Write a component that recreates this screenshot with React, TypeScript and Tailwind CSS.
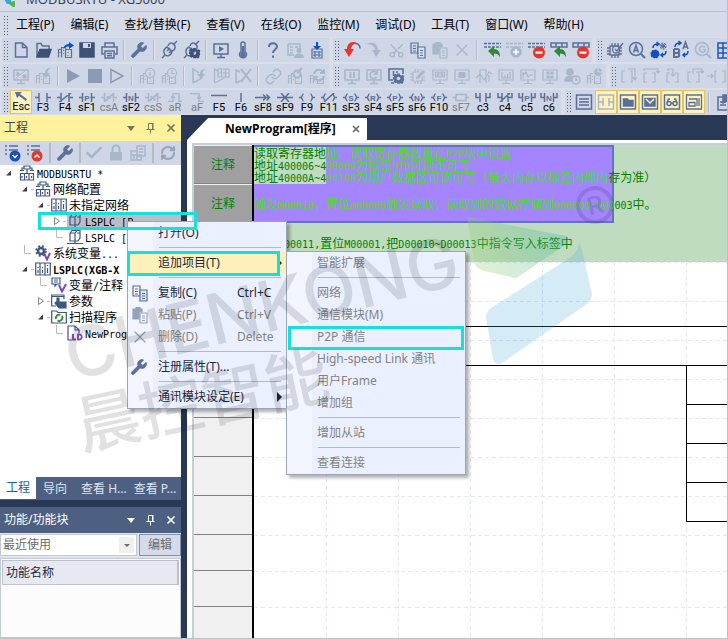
import { ReactNode } from 'react';
import clsx from 'clsx';
import { Check, Link as LinkIcon, RefreshCw, Scissors, Wrench, X } from 'lucide-react';

interface Tool {
  name: string;
  icon?: ReactNode;
  off?: boolean;
  on?: boolean;
  key?: string;
  sep?: boolean;
}

interface MenuEntry {
  label?: string;
  shortcut?: string;
  icon?: ReactNode;
  off?: boolean;
  sub?: boolean;
  hot?: boolean;
}

interface TreeRow {
  depth: number;
  label: string;
  icon: ReactNode;
  state?: 'open' | 'closed';
  bold?: boolean;
  selected?: boolean;
}

const SEP: Tool = { name: 'sep', sep: true };

function Glyph({ children, w = 1.5 }: { children: ReactNode; w?: number }) {
  return (
    <svg viewBox="0 0 20 20" className="w-5 h-5 shrink-0" fill="none" stroke="currentColor" strokeWidth={w} aria-hidden="true">
      {children}
    </svg>
  );
}

/* small building blocks shared by several toolbar icons */
const screen = <path d="M3 4h14v10H3zM10 14v3M6 17.500h8" />;
const building = <path d="M3.500 17.500v-8h3v8M6.500 17.500v-10h4v10M10.500 17.500v-8h6v8zM8.500 10v1M8.500 13v1M13 12v1M13 15v1M5 12v1" />;
const cog = (x: number, y: number) => (
  <g stroke="none" fill="currentColor">
    <path
      transform={`translate(${x} ${y})`}
      fillRule="evenodd"
      d="M-1.200-5h2.400l.4 1.500 1.300.5 1.400-.8 1.600 1.600-.8 1.400.5 1.300V2l-1 .8.5 1.200-1.600 1.600-1.600-.8L1.200 5.300h-2.400l-.6-1.300-1.600.7L-5 3.100l.8-1.500L-5.500 1v-2.200l1.400-.5-.7-1.500 1.600-1.500 1.500.7zM0-1.800A1.800 1.800 0 1 0 0 1.800 1.800 1.800 0 1 0 0-1.800z"
    />
  </g>
);
const chip = <path d="M5 6h9v9H5zM7 3v3M10 3v3M13 3v3M7 15v3M10 15v3M13 15v3M2 8h3M2 11h3M2 14h3M14 8h3M14 11h3M14 14h3" />;
const plug = <path d="M3 18l3-3M6 15c-3-4 0-7 2-8l5 5c-1 3-4 5-7 3zM9 6l1-2c4-3 8 2 5 6l-2 1M14 5l4-4M8 11l3-3M10 13l3-3" />;
const stopSign = (
  <g stroke="none">
    <circle cx="13" cy="12.500" r="6" fill="#e5352c" />
    <path d="M9.500 11.500h7v2.200h-7z" fill="#fff" />
  </g>
);
const backArrow = <path d="M6 11l6-5v3c4 0 6 3 6 8-1.500-2.500-3-3.500-6-3.500V17z" fill="#2f8a36" stroke="none" />;
const dashes = <path d="M2 3.500h17M2 7h17" strokeDasharray="3 1" />;
const blocks = <path d="M3 3h16v4H3zM8 3v4M14 3v4" fill="none" />;

const copyIcon = (
  <Glyph w={1.2}>
    <path d="M3 3h7v10H3zM5 6h3M5 8.500h3M5 11h3" />
    <path d="M10 7h7v11h-7z" fill="#dbe2f2" />
    <path d="M12 10.500h3M12 13h3M12 15.500h3" />
  </Glyph>
);
const pasteIcon = (
  <Glyph w={1.2}>
    <path d="M3 4h3V2.500h4V4h2v3H9v7H3z" fill="currentColor" />
    <path d="M10 8h7v10h-7zM12 11h3M12 13h3M12 15.500h3" />
  </Glyph>
);
const wrenchIcon = <Wrench className="w-[18px] h-[18px] shrink-0" fill="currentColor" strokeWidth={1} />;
const crossIcon = <X className="w-5 h-5 shrink-0" strokeWidth={1.5} />;

const fileTools: Tool[] = [
  { name: '新建', icon: <Glyph><path d="M4.500 3h7l4.500 4.500V17H4.500zM11.500 3v4.500H16" /></Glyph> },
  {
    name: '打开',
    icon: <Glyph><path d="M4 17V3.500h4L9.500 6H16v3" /><path d="M4 17l3-7.500h11L15.500 17z" fill="#3d5277" stroke="#3d5277" /></Glyph>,
  },
  {
    name: '导入工程',
    icon: <Glyph w={1.2}>{building}<path d="M8 9c1-4 4-5 6-5V2l5 3.500L14 9V6.500c-2 0-4 .5-6 2.500z" fill="#0a50cc" stroke="none" /></Glyph>,
  },
  {
    name: '保存',
    icon: <Glyph><path d="M3 3h14v14H3z" fill="#3d5277" stroke="#3d5277" /><path d="M6 3h8v5H6z" fill="#cfd6e5" stroke="none" /><path d="M11 4h2v3h-2z" fill="#3d5277" stroke="none" /></Glyph>,
  },
  { name: '打印', icon: <Glyph><path d="M6 7V3h9v4M5 14H3V7h15v7h-2M6 11h9v7H6zM8 13.500h5M8 15.700h5" /></Glyph> },
  SEP,
  { name: '设置', icon: wrenchIcon },
  SEP,
  { name: '连接', icon: <Glyph>{plug}</Glyph> },
  { name: '连接设置', icon: <Glyph>{plug}<g color="#3d5277">{cog(13.5, 13)}</g></Glyph> },
  SEP,
  { name: '监视', icon: <Glyph>{screen}<path d="M8 6l5 3-5 3z" fill="currentColor" stroke="none" /></Glyph> },
  { name: '诊断', icon: <Glyph><path d="M8 11.500V4a2 2 0 0 1 4 0v7.500a3.500 3.500 0 1 1-4 0z" /><path d="M10 6v8" strokeWidth="2" /><circle cx="10" cy="14.500" r="2" fill="currentColor" /></Glyph> },
  SEP,
  { name: '帮助', icon: <Glyph w={2}><path d="M6 7c0-5 8-5 8-.5 0 3-4 3-4 6.500" /><path d="M10 15.500v2.200" /></Glyph> },
  { name: '用户', off: true, icon: <Glyph><path d="M3 4h12v5M3 4v11h6M5 7h3M10 7h3M5 10h3M5 13h3" /><circle cx="14" cy="10.500" r="2.500" fill="currentColor" stroke="none" /><path d="M9 18c0-6 10-6 10 0z" fill="currentColor" stroke="none" /></Glyph> },
  { name: '写入', icon: <Glyph w={1.2}><path d="M5 9h10v9H5zM8 11v6M12 11v6M6 12h8M6 15h8" /><path d="M9 2h2v4h3l-4 4-4-4h3z" fill="#0a50cc" stroke="none" /></Glyph> },
];

const editTools: Tool[] = [
  { name: '撤消', icon: <Glyph><path d="M15 3C9 0 5 4 5 9H2l5 8 5-8H9c0-3 2-5 6-6z" fill="#e5352c" stroke="none" /><path d="M13 3.500c3 0 5 2 5 5" /></Glyph> },
  { name: '重做', off: true, icon: <Glyph><path d="M2 4c7-3 12 0 12 6h3l-5 7-4-7h3c0-3-3-6-9-6z" fill="currentColor" stroke="none" /></Glyph> },
  { name: '剪切', off: true, icon: <Scissors className="w-[17px] h-[17px] -rotate-90" strokeWidth={2} /> },
  { name: '复制', icon: copyIcon },
  { name: '粘贴', off: true, icon: pasteIcon },
  { name: '删除', off: true, icon: crossIcon },
  SEP,
  { name: '恢复行', icon: <Glyph>{dashes}{backArrow}</Glyph> },
  { name: '插入行', off: true, icon: <Glyph>{dashes}<circle cx="12" cy="12" r="5" fill="currentColor" /><path d="M9 12h6M12 9v6" stroke="#fff" /></Glyph> },
  { name: '删除行', icon: <Glyph>{dashes}{stopSign}</Glyph> },
  { name: '恢复块', icon: <Glyph>{blocks}{backArrow}</Glyph> },
  { name: '删除块', icon: <Glyph>{blocks}{stopSign}</Glyph> },
];

const findTools: Tool[] = [
  { name: '芯片检查', icon: <Glyph w={1.3}>{chip}<circle cx="11" cy="9.500" r="3.500" fill="#cfd6e5" /><path d="M10 9l2 2 6-8" /></Glyph> },
  { name: '查找', icon: <Glyph><circle cx="9" cy="9" r="6.500" /><path d="M14 14l4 4" strokeWidth="2" /><path d="M6.500 12.500L9 5.500l2.500 7M7.500 10.500h3" /></Glyph> },
  {
    name: '替换变量',
    icon: <Glyph w={1.2}><circle cx="14" cy="6" r="3" strokeDasharray="2 1" /><circle cx="14" cy="6" r="1.500" fill="currentColor" /><circle cx="6" cy="14" r="4" fill="#0a50cc" stroke="#3d5277" strokeDasharray="2 1" /><path d="M4 8c0-3 2-4 5-4M7.500 2L10 4 7.500 6M17 11c0 3-2 4-4 4M14 13l-2 2 2 2" stroke="#0a50cc" strokeWidth="1.500" /></Glyph>,
  },
  {
    name: '替换文本',
    icon: <Glyph><path d="M12 9l2.500-7L17 9M13 7h3" /><path d="M3 9v8h3c3 0 3-4 0-4H3M3 9h3c3 0 3 4 0 4" strokeWidth="2" /><path d="M4 7c0-3 2-4 5-4M7.500 1L10 3 7.500 5M17 11c0 3-2 4-4 4M14 13l-2 2 2 2" stroke="#0a50cc" /></Glyph>,
  },
  { name: '再次查找', off: true, icon: <Glyph><circle cx="9" cy="9" r="6.500" /><path d="M14 14l4 4" strokeWidth="2" /><path d="M12 7.500A3 3 0 1 0 12 11V9.500h-2" /></Glyph> },
  { name: '表格', icon: <Glyph><path d="M3 3h15v15H3zM3 8h15M3 13h15M8 3v15M13 3v15" stroke="#1f55c0" /></Glyph> },
];

const runTools: Tool[] = [
  { name: '监控切换', off: true, icon: <Glyph>{screen}<path d="M5 12l9-7M6 6l3 2-3 2zM12 9h3v3h-3z" fill="currentColor" strokeWidth="1" /></Glyph> },
  { name: '下载', off: true, icon: <Glyph w={1.2}>{building}<path d="M18 2c-4 0-6 2-6 5H9l4 5 4-5h-2.500c0-2 1-4 3.500-5z" fill="currentColor" stroke="none" /></Glyph> },
  SEP,
  { name: '运行', off: true, icon: <Glyph><path d="M4 3l13 7-13 7z" fill="#8b9bb5" stroke="none" /></Glyph> },
  { name: '停止', off: true, icon: <Glyph><path d="M3 3h14v14H3z" fill="#8b9bb5" stroke="none" /></Glyph> },
  { name: '单步', off: true, icon: <Glyph><path d="M4 3.500l12 6.500-12 6.500z" stroke="#8b9bb5" /></Glyph> },
  SEP,
  { name: '信息', off: true, icon: <Glyph w={1.2}>{building}<circle cx="13" cy="7" r="4.500" fill="#cfd6e5" /><path d="M13 6v4M13 4v1" /></Glyph> },
  { name: '历史', off: true, icon: <Glyph w={1.2}>{building}<circle cx="13" cy="7" r="4.500" fill="#cfd6e5" /><path d="M13 4v3.500h2.500" /></Glyph> },
  SEP,
  { name: '强制', off: true, icon: <Glyph><path d="M4 17V3l6 4M4 17l9-5" /><path d="M17 3c-5 0-6 3-6 5H8l4 5 4-5h-2.500c0-2 1-4 3.500-5z" fill="currentColor" stroke="none" /></Glyph> },
  { name: '强制表', off: true, icon: <Glyph w={1.2}><path d="M3.500 17V3l3 2M3.500 17l10-5M7 3h11v8H7zM7 7h11M10.500 3v8M14.500 3v8" /></Glyph> },
  { name: '取消强制', off: true, icon: <Glyph><path d="M3 17V4l4 2M3 17l6-3" /><path d="M8 3l10 13M18 3L8 16" strokeWidth="2" /></Glyph> },
  SEP,
  { name: '链接', off: true, icon: <LinkIcon className="w-[17px] h-[17px]" strokeWidth={2} /> },
  { name: '模块检查', off: true, icon: <Glyph w={1.2}>{building}<circle cx="12" cy="8" r="3.500" fill="#cfd6e5" strokeWidth="2" /><path d="M12 7l5-5" strokeWidth="2" /></Glyph> },
  { name: '模块刷新', off: true, icon: <Glyph w={1.2}>{building}<circle cx="12" cy="8.500" r="6" fill="#cfd6e5" stroke="none" /><path d="M7 8a5 5 0 0 1 9-2M17 10a5 5 0 0 1-9 2M17 3v4h-4M7 15v-4h4" strokeWidth="2" /></Glyph> },
];

const monitorTools: Tool[] = [
  { name: '暂停监控', off: true, icon: <Glyph>{screen}<path d="M8.500 6v6M12 6v6" strokeWidth="2" /></Glyph> },
  { name: '恢复监控', off: true, icon: <Glyph>{screen}<path d="M12.500 7a3.500 3.500 0 1 0 0 4M13 5v3h-3" /></Glyph> },
  { name: '监控设置', icon: <Glyph><path d="M17 8V3H3v11h4M7.500 5v5M11 5v2M5 17h3" />{cog(12.5, 12.5)}</Glyph> },
  { name: '编辑芯片', off: true, icon: <Glyph w={1.2}>{chip}<path d="M7 14l1-4 7-7 3 3-7 7z" fill="currentColor" stroke="#cfd6e5" /></Glyph> },
  { name: '数值', off: true, icon: <Glyph w={1.2}>{screen}<path d="M5.500 6h2v5h-2zM9 6h2v5H9zM12.500 6h2v5h-2z" /></Glyph> },
  { name: '特殊模块', off: true, icon: <Glyph w={1.2}>{screen}<path d="M7.500 6.500h5v5h-5z" fill="currentColor" /><path d="M5.500 8h9M5.500 10.500h9" /></Glyph> },
  { name: '趋势', off: true, icon: <Glyph w={1.2}><path d="M6 17V4h6v13M2 12l4-4 4 6 5-8 3 2M15 9v7" /></Glyph> },
  { name: '柱状图', off: true, icon: <Glyph w={1.2}>{screen}<path d="M6 6v6h9M9 12V9M11.500 12V8M14 12V6" /></Glyph> },
  { name: '曲线', off: true, icon: <Glyph w={1.2}>{screen}<path d="M5 9l3-3 2 5 2-2h3M5 6v6" /></Glyph> },
  { name: '窗格', off: true, icon: <Glyph w={1.2}>{screen}<path d="M7 6h2v2H7zM11 6h2v2h-2zM7 10h2v2H7zM11 10h2v2h-2z" fill="currentColor" /></Glyph> },
  { name: '用户事件', off: true, icon: <Glyph><circle cx="8" cy="6" r="3" fill="currentColor" /><path d="M3 15c0-6 9-6 9-2l-2 2z" fill="currentColor" /><circle cx="14" cy="14" r="4" fill="#cfd6e5" /><path d="M14 11.500V14h2" /></Glyph> },
  { name: '数据统计', off: true, icon: <Glyph w={1.2}>{building}<circle cx="14" cy="6" r="4.500" fill="currentColor" stroke="#cfd6e5" /><path d="M14 6V1.500M14 6h4.500" stroke="#cfd6e5" /></Glyph> },
];

const debugTools: Tool[] = [
  { name: '步入', off: true, icon: <Glyph w={1.2}><path d="M6 5H3v11h3M11 5h2v11h-2M9 3h7v10M14 11l2 3 2-3" /></Glyph> },
  { name: '步过', off: true, icon: <Glyph w={1.2}><path d="M6 7H3v9h3M11 7h3v9h-3M3 5V3h14v4M15 5l2 2 2-2" /></Glyph> },
  { name: '步出', off: true, icon: <Glyph w={1.2}><path d="M7 7H4v9h3M12 7h3v9h-3M5 5V3h5v7M8 8l2 2 2-2" /></Glyph> },
  { name: '运行到断点', off: true, icon: <Glyph w={1.2}><path d="M6 6H3v10h3M11 6h3v10h-3M8 8V3h9v4M15 5l2 2 2-2" /></Glyph> },
  { name: '运行到光标', off: true, icon: <Glyph w={1.2}><path d="M10 5H8v11h2M15 5h3v11h-3M0 10h6M4 8l2 2-2 2" /></Glyph> },
];

/* ladder symbols sit above their function key */
function Ladder({ d, letter }: { d: string; letter?: string }) {
  return (
    <svg viewBox="0 0 18 9" className="w-[18px] h-[9px] shrink-0" fill="none" stroke="currentColor" strokeWidth={1.5} aria-hidden="true">
      <path d={d} />
      {letter && (
        <text x="9" y="8" textAnchor="middle" fontSize="8" fontWeight="700" fontFamily="Liberation Sans" fill="currentColor" stroke="none">
          {letter}
        </text>
      )}
    </svg>
  );
}

const contact = 'M1 4.500h4M5 0v9M13 0v9M13 4.500h4';
const narrow = 'M1 4.500h3M4.500 0v9M13.500 0v9M14 4.500h3';
const coil = 'M1 4.500h2M5.500 1C4 1 4.500 4 3 4.500 4.500 5 4 8 5.500 8M12.500 1c1.500 0 1 3 2.500 3.500C13.500 5 14 8 12.500 8M15 4.500h2';
const parallel = 'M2 0v4.500h4M6 0v9M12 0v9M12 4.500h4V0';

const ladderTools: Tool[] = [
  { name: '选择', key: 'Esc', on: true, icon: <svg viewBox="0 0 18 9" className="w-[18px] h-[9px] shrink-0" aria-hidden="true"><path d="M3 0h7L8 2l7 5-1 2-7-5-2 2z" fill="currentColor" /></svg> },
  { name: '常开触点', key: 'F3', icon: <Ladder d={contact} /> },
  { name: '常闭触点', key: 'F4', icon: <Ladder d={contact + 'M3 9L15 0'} /> },
  { name: '上升沿触点', key: 'sF1', icon: <Ladder d={narrow} letter="P" /> },
  { name: '上升沿取反', key: 'csA', off: true, icon: <Ladder d={narrow + 'M4 9L14 0'} letter="P" /> },
  { name: '下降沿触点', key: 'sF2', icon: <Ladder d={narrow} letter="N" /> },
  { name: '下降沿取反', key: 'csS', off: true, icon: <Ladder d={narrow + 'M4 9L14 0'} letter="N" /> },
  { name: '上升沿', key: 'aR', off: true, icon: <Ladder d="M2 8.500h5v-8h6v8h3M5 5l2-2 2 2" /> },
  { name: '下降沿', key: 'aF', off: true, icon: <Ladder d="M2 .5h9v8h5M9 4l2 2 2-2" /> },
  { name: '横线', key: 'F5', icon: <Ladder d="M1 2.500h16" /> },
  { name: '竖线', key: 'F6', icon: <Ladder d="M9 0v9" /> },
  { name: '横线填充', key: 'sF8', icon: <Ladder d="M1 4.500h14M9 1.500l3 3-3 3M12.500 1.500l3 3-3 3" /> },
  { name: '取反', key: 'sF9', icon: <Ladder d="M1 4.500h16M5 0l4 4.500L5 9M13 0L9 4.500 13 9" /> },
  { name: '线圈', key: 'F9', icon: <Ladder d={coil} /> },
  { name: '反线圈', key: 'F11', icon: <Ladder d={coil + 'M4 9L14 0'} /> },
  { name: '置位线圈', key: 'sF3', icon: <Ladder d={coil} letter="S" /> },
  { name: '复位线圈', key: 'sF4', icon: <Ladder d={coil} letter="R" /> },
  { name: '上升沿线圈', key: 'sF5', icon: <Ladder d={coil} letter="P" /> },
  { name: '下降沿线圈', key: 'sF6', icon: <Ladder d={coil} letter="N" /> },
  { name: '功能', key: 'F10', icon: <Ladder d={coil} letter="F" /> },
  { name: '功能块', key: 'sF7', off: true, icon: <Ladder d="M1 4.500h3M4 1.500h10v6H4zM14 4.500h3" /> },
  { name: '并联常开', key: 'c3', icon: <Ladder d={parallel} /> },
  { name: '并联常闭', key: 'c4', icon: <Ladder d={parallel + 'M4 9L14 0'} /> },
  { name: '并联上升沿', key: 'c5', icon: <Ladder d="M1 0v4.500h3M4.500 0v9M13.500 0v9M14 4.500h3V0" letter="P" /> },
  { name: '并联下降沿', key: 'c6', icon: <Ladder d="M1 0v4.500h3M4.500 0v9M13.500 0v9M14 4.500h3V0" letter="N" /> },
];

const frame = <path d="M2.500 3h15v14h-15z" />;
const viewTools: Tool[] = [
  { name: '程序列表', icon: <Glyph>{frame}<path d="M5 7h10M5 10h10M5 13h10" /></Glyph> },
  { name: '梯形图', on: true, icon: <Glyph><g stroke="#a9b5c6">{frame}<path d="M3 10h4M7 6v8M13 6v8M13 10h4" /></g></Glyph> },
  { name: '文件夹', on: true, icon: <Glyph>{frame}<path d="M5.500 7h4l1 1.500H15V14H5.500z" fill="currentColor" /></Glyph> },
  { name: '消息', on: true, icon: <Glyph>{frame}<path d="M5 6.500h10V14H5z" fill="currentColor" /><path d="M6 7l4 4 4-4" stroke="#fff3bd" /></Glyph> },
  { name: '查看', on: true, icon: <Glyph>{frame}<circle cx="7" cy="11.500" r="2" /><circle cx="13" cy="11.500" r="2" /><path d="M5 11l1.500-4H8M15 11l-1.500-4H12M9 11h2" /></Glyph> },
  { name: '变量监视', on: true, icon: <Glyph w={1.3}>{frame}<path d="M5 7h8v7M5 10.500h6v3.500H5zM15 6v8" /></Glyph> },
  SEP,
  { name: '书签', icon: <Glyph><path d="M9 5H4v13h11v-6M6 10h6M6 13h6" /><path d="M9 3h6v8l-3-2-3 2z" fill="currentColor" /></Glyph> },
];

function ToolGroup({ tools, grow }: { tools: Tool[]; grow?: boolean }) {
  return (
    <div className={clsx('flex items-center h-6 bg-[#cfd6e5] shrink-0 pr-px', grow && 'flex-1')}>
      <span className="w-[5px] h-5 ml-px mr-0.5 bg-[radial-gradient(circle,#59627a_0.8px,transparent_1px)] bg-[size:3px_3px] shrink-0" />
      {tools.map((tool, i) =>
        tool.sep ? (
          <span key={i} className="w-0.5 h-5 mx-[3px] bg-[#b3bac8] border-r border-[#dfe4ee] shrink-0" />
        ) : (
          <button
            key={i}
            type="button"
            aria-label={tool.name}
            className={clsx(
              'w-[22px] h-6 flex flex-col items-center shrink-0',
              tool.key ? 'justify-end' : 'justify-center',
              tool.on && 'bg-[#fff3bd] border border-[#e5c365]',
              tool.off ? 'text-[#a8b7c9]' : 'text-[#5a709a]'
            )}
          >
            {tool.icon}
            {tool.key && (
              <span className={clsx("text-[11px] leading-3 font-['Roboto',sans-serif]", tool.off ? 'text-[#7d7d7d]' : 'text-black')}>
                {tool.key}
              </span>
            )}
          </button>
        )
      )}
    </div>
  );
}

/* latin characters are half the width of a CJK character */
function Mixed({ text }: { text: string }) {
  return (
    <>
      {text.split(/([\x20-\x7e]+)/).map((part, i) =>
        /^[\x20-\x7e]/.test(part) ? (
          <span key={i} className="text-[10px] leading-[8px] font-['DejaVu_Sans_Mono',monospace] whitespace-pre">{part}</span>
        ) : (
          part
        )
      )}
    </>
  );
}

function TreeIcon({ children }: { children: ReactNode }) {
  return (
    <svg viewBox="0 0 16 16" className="w-4 h-4 shrink-0" fill="none" stroke="#3f5680" strokeWidth={1.2} aria-hidden="true">
      {children}
    </svg>
  );
}

const netIcon = (
  <TreeIcon>
    <path d="M5 1h6v3H5zM3 5V3h2M11 3h2v2M1 5.500h4M11 5.500h4M8 4v4M1.500 8.500h13V15h-13zM5.500 9v6M10 9v6M3 11v2M7.500 11v2M12.500 11v2" />
  </TreeIcon>
);
const rackIcon = <TreeIcon><path d="M.7 2h14.600v12H.7zM5 2v12M10 2v12M3 6v1M3 9v3M7.500 6v1M7.500 9v3M12.500 4v1M12.500 7v5" /></TreeIcon>;
const plcIcon = <TreeIcon><path d="M3 4l2-2.500h8V9l-2 3H3zM3 4h5v8M8 4l2-2.500M10 4h3M0 14.500h16M8 12v2" /></TreeIcon>;

const tree: TreeRow[] = [
  { depth: 0, label: 'MODBUSRTU *', icon: netIcon, state: 'open' },
  { depth: 1, label: '网络配置', icon: netIcon, state: 'open' },
  { depth: 2, label: '未指定网络', icon: rackIcon, state: 'open' },
  { depth: 3, label: 'LSPLC [P', icon: plcIcon, state: 'closed', selected: true },
  { depth: 3, label: 'LSPLC [', icon: plcIcon },
  {
    depth: 1,
    label: '系统变量...',
    icon: <TreeIcon><circle cx="6" cy="6" r="3" strokeWidth="2.500" /><circle cx="6" cy="6" r="5" strokeDasharray="2 2" strokeWidth="1.500" /><path d="M9 8l3 6.500L15 8" stroke="#7b46c4" strokeWidth="2" /></TreeIcon>,
  },
  { depth: 1, label: 'LSPLC(XGB-X', icon: rackIcon, state: 'open', bold: true },
  {
    depth: 2,
    label: '变量/注释',
    icon: <TreeIcon><path d="M1 1h8v6H6L4 9V7H1zM3 3h4M3 5h4" /><path d="M8 8l3 6.500L15 7" stroke="#7b46c4" strokeWidth="2" /></TreeIcon>,
  },
  {
    depth: 2,
    label: '参数',
    icon: <TreeIcon><path d="M5 13H.7V2H13v4M.7 3.500H13" /><path d="M6 5h2v4h7v6H8l-4-5 1-1 1 1z" fill="#3f5680" /></TreeIcon>,
    state: 'closed',
  },
  {
    depth: 2,
    label: '扫描程序',
    icon: <TreeIcon><path d="M.7 2h5l1 1.500h8.600V14H.7z" /><path d="M5 10a3.300 3.300 0 0 1 4.500-4M11 7a3.300 3.300 0 0 1-4.500 4.500" stroke="#2f8a36" strokeWidth="1.800" /></TreeIcon>,
    state: 'open',
  },
  {
    depth: 3,
    label: 'NewProgram',
    icon: <TreeIcon><path d="M5 15H1V1h7l4 4v3M8 1v4h4" /><path d="M6 9v5.500h3M11 9.500v5c5 1 5-6 0-5z" stroke="#7b46c4" strokeWidth="1.800" /></TreeIcon>,
  },
];

function Expander({ row }: { row: TreeRow }) {
  return (
    <svg viewBox="0 0 16 16" className="w-4 h-4 shrink-0" aria-hidden="true">
      {!row.state && <path d="M5.500 0v8.500H12" stroke="#b8bcc6" fill="none" />}
      {row.state && row.depth > 0 && <path d="M12 8.500h3" stroke="#b8bcc6" />}
      {row.state === 'open' && <path d="M8 5.500v5H3z" fill="#404040" />}
      {row.state === 'closed' && <path d="M3.500 4.500v7l5-3.500z" fill="#fff" stroke="#858585" />}
    </svg>
  );
}

const mainMenu: MenuEntry[] = [
  { label: '打开(O)' },
  {},
  { label: '追加项目(T)', sub: true, hot: true },
  {},
  { label: '复制(C)', shortcut: 'Ctrl+C', icon: copyIcon },
  { label: '粘贴(P)', shortcut: 'Ctrl+V', icon: pasteIcon, off: true },
  { label: '删除(D)', shortcut: 'Delete', icon: crossIcon, off: true },
  {},
  { label: '注册属性(T)...', icon: wrenchIcon },
  {},
  { label: '通讯模块设定(E)', sub: true },
];

const subMenu: MenuEntry[] = [
  { label: '智能扩展', off: true },
  {},
  { label: '网络', off: true },
  { label: '通信模块(M)', off: true },
  { label: 'P2P 通信', off: true },
  { label: 'High-speed Link 通讯', off: true },
  { label: '用户Frame', off: true },
  { label: '增加组', off: true },
  {},
  { label: '增加从站', off: true },
  {},
  { label: '查看连接', off: true },
];

function ContextMenu({ entries, className }: { entries: MenuEntry[]; className: string }) {
  return (
    <div
      role="menu"
      className={clsx(
        'absolute border border-[#9ba7b7] bg-[linear-gradient(to_right,#f2f4fe_25px,#eaf0ff_25px)] shadow-[3px_3px_3px_rgba(0,0,0,0.3)]',
        className
      )}
    >
      {entries.map((entry, i) =>
        entry.label ? (
          <button
            key={i}
            type="button"
            role="menuitem"
            disabled={entry.off}
            className={clsx(
              'w-full h-[22px] flex items-center text-xs text-left pr-2 whitespace-nowrap',
              entry.hot && 'bg-[#fdf0bb]',
              entry.off ? 'text-[#838383]' : 'text-[#1b293e]'
            )}
          >
            <span className={clsx('w-[30px] pl-0.5 shrink-0', entry.off ? 'text-[#94a3b8]' : 'text-[#5a709a]')}>{entry.icon}</span>
            <span className="flex-1">{entry.label}</span>
            {entry.shortcut && <span className="w-[41px]">{entry.shortcut}</span>}
            {entry.sub && <span className="-mr-1 border-y-[5px] border-y-transparent border-l-[5px] border-l-[#1b293e]" />}
          </button>
        ) : (
          <div key={i} className="h-2 pt-[3px] pl-[31px] pr-[5px]">
            <div className="h-px bg-[#b5b8ca]" />
          </div>
        )
      )}
    </div>
  );
}

function PaneButtons() {
  return (
    <div className="flex items-center gap-2">
      <button type="button" aria-label="菜单" className="w-3 flex justify-center">
        <span className="border-x-[4px] border-x-transparent border-t-[5px] border-t-current" />
      </button>
      <button type="button" aria-label="固定" className="w-3">
        <svg viewBox="0 0 12 12" className="w-3 h-3" fill="none" stroke="currentColor">
          <path d="M3.500 7V1.500h4V7M8 1v6M1.500 7.500h8M5.500 8v3.500" />
        </svg>
      </button>
      <button type="button" aria-label="关闭" className="w-3">
        <X className="w-3 h-3" strokeWidth={3.5} />
      </button>
    </div>
  );
}

function ProjectPane() {
  const tabs = ['工程', '导向', '查看 H...', '查看 P...'];
  return (
    <>
      <div className="h-[26px] px-1 flex items-center justify-between bg-[#fff29d] text-xs text-[#3a3f55]">
        <h2>工程</h2>
        <div className="text-[#7a7455]"><PaneButtons /></div>
      </div>
      <div className="h-6 flex items-center bg-[#cfd6e5] px-0.5">
        <button type="button" aria-label="展开" className="w-[22px] text-[#5a709a]">
          <Glyph><path d="M3 3h2M7 3h9M3 7h2M7 7h9M3 11h2" /><circle cx="13" cy="13" r="5.500" fill="#1a4fc0" stroke="none" /><path d="M10.500 12l2.500 2.500L15.500 12" stroke="#fff" /></Glyph>
        </button>
        <button type="button" aria-label="折叠" className="w-[22px] text-[#5a709a]">
          <Glyph><path d="M3 3h2M7 3h9M3 7h2M7 7h9M3 11h2" /><circle cx="13" cy="13" r="5.500" fill="#e5352c" stroke="none" /><path d="M10.500 14.500L13 12l2.500 2.500" stroke="#fff" /></Glyph>
        </button>
        <span className="w-0.5 h-5 mx-[3px] bg-[#b3bac8]" />
        <button type="button" aria-label="属性" className="w-[22px] flex justify-center text-[#5a709a]">{wrenchIcon}</button>
        <span className="w-0.5 h-5 mx-[3px] bg-[#b3bac8]" />
        <button type="button" aria-label="应用" className="w-[22px] flex justify-center text-[#a8b7c9]"><Check className="w-5 h-5" strokeWidth={3} /></button>
        <button type="button" aria-label="锁定" className="w-[22px] flex justify-center text-[#a8b7c9]">
          <Glyph w={2}><path d="M6.500 9V6a3.500 3.500 0 0 1 7 0v3" /><path d="M4.500 9.500h11V17h-11z" fill="currentColor" strokeWidth="1" /></Glyph>
        </button>
        <button type="button" aria-label="比较" className="w-[22px] flex justify-center text-[#a8b7c9]">
          <Glyph><path d="M9 3h8v10H9zM11 6h4M11 9h4M3 8h6v9H3zM3 12h10v5H3M6 12v5M9 12v5" /></Glyph>
        </button>
        <span className="w-0.5 h-5 mx-[3px] bg-[#b3bac8]" />
        <button type="button" aria-label="刷新" className="w-[22px] flex justify-center text-[#94a3b8]"><RefreshCw className="w-4 h-4" strokeWidth={3} /></button>
      </div>
      <ul className="flex-1 bg-white text-xs font-['Noto_Sans_CJK_SC',sans-serif] text-black overflow-hidden">
        {tree.map((row, i) => (
          <li key={i} className="h-4 flex items-center pl-[3px] whitespace-nowrap leading-4">
            {Array.from({ length: row.depth }, (_, n) => (
              <span key={n} className="w-4 shrink-0" />
            ))}
            <Expander row={row} />
            <span className={clsx('flex-1 flex items-center gap-0.5', row.bold && 'font-bold', row.selected && 'bg-[#b9bec9]')}>
              {row.icon}
              <span><Mixed text={row.label} /></span>
            </span>
          </li>
        ))}
      </ul>
      <div className="h-[23px] flex bg-[#4d6082] text-xs text-[#dfe5f0]" role="tablist">
        {tabs.map((tab, i) => (
          <button
            key={tab}
            type="button"
            role="tab"
            aria-selected={i === 0}
            className={clsx('whitespace-nowrap', i === 0 ? 'bg-white text-[#0b62ad] px-1.5 mb-px' : 'px-[7px]', i === 3 && 'pl-0')}
          >
            {tab}
          </button>
        ))}
      </div>
    </>
  );
}

function FunctionPane() {
  return (
    <>
      <div className="mt-[7px] h-[26px] px-1 flex items-center justify-between bg-[#4d6082] text-xs text-white">
        <h2>功能/功能块</h2>
        <PaneButtons />
      </div>
      <div className="bg-[#dfe3ee] pt-px pb-0.5 flex gap-0.5 text-xs text-[#6d6d6d]">
        <div className="relative flex-1 border border-[#c3c8d3] bg-white">
          <select aria-label="功能类别" className="appearance-none w-full h-5 pl-0.5 bg-white">
            <option>最近使用</option>
          </select>
          <span className="absolute right-0.5 top-0.5 bottom-0.5 w-[15px] flex items-center justify-center bg-[#f0f0f0] pointer-events-none">
            <span className="border-x-[3px] border-x-transparent border-t-[3px] border-t-[#6d6d6d]" />
          </span>
        </div>
        <button type="button" className="w-[42px] h-[22px] bg-[#d6dbe9] border border-[#8591a8]">编辑</button>
      </div>
      <div className="h-20 bg-[#fcfcfc] border border-[#c3c8d3] p-px">
        <table className="w-full text-xs text-[#1b293e]">
          <thead>
            <tr>
              <th className="h-6 text-left font-normal pl-[3px] py-0 bg-[#e6e9f2] border border-r-2 border-[#bcc1cc]">功能名称</th>
            </tr>
          </thead>
        </table>
      </div>
    </>
  );
}

function Editor() {
  const columns = [72, 144, 216, 288, 360, 432];
  const rows = [117, 156, 195, 234, 273, 312, 351, 390, 426, 462];
  return (
    <div className="flex-1 flex flex-col min-w-0 pt-[3px]">
      <div className="w-[180px] h-[22px] pl-[38px] pr-1.5 flex items-center justify-between bg-white [clip-path:polygon(21px_0,100%_0,100%_100%,0_100%)]">
        <span className="text-xs font-bold font-['Open_Sans','Noto_Sans_CJK_SC',sans-serif] text-black whitespace-nowrap">NewProgram[程序]</span>
        <button type="button" aria-label="关闭" className="text-[#6b6b6b]"><X className="w-2.5 h-2.5" strokeWidth={4} /></button>
      </div>
      <div className="flex-1 flex flex-col bg-white pl-[5px] pt-[3px]">
        <div className="flex-1 flex border-l-2 border-t-2 border-[#c6cddb]">
          <div className="w-[60px] shrink-0 bg-[#f0f0f0] border-r-2 border-black text-xs leading-4 text-[#008000]">
            {[0, 1, 2].map((n) => (
              <div key={n} className="h-[39px] flex items-center justify-center bg-[#a0a0a0] border-t border-[#f0f0f0] border-b border-b-[#808080]">
                注释
              </div>
            ))}
            {[3, 4, 5, 6, 7, 8, 9].map((n) => (
              <div key={n} className="h-[39px] border-b border-[#808080]" />
            ))}
            <div className="h-9 border-b border-[#808080]" />
            <div className="h-9 border-b border-[#808080]" />
          </div>
          <div className="flex-1 relative min-w-0 overflow-hidden text-xs leading-3 font-['Noto_Sans_CJK_SC',sans-serif] whitespace-nowrap text-[#008000]">
            <svg className="absolute inset-0 w-full h-full" stroke="#e6e6fa" shapeRendering="crispEdges" aria-hidden="true">
              {columns.map((x) => (
                <line key={x} x1={x} x2={x} y1="117" y2="100%" strokeDasharray="4 3" />
              ))}
              {rows.map((y) => (
                <line key={y} x1="0" x2="100%" y1={y} y2={y} strokeDasharray="4 3" />
              ))}
              <g stroke="#000">
                <line x1="0" x2="100%" y1="181" y2="181" />
                <line x1="0" x2="100%" y1="220" y2="220" />
                <line x1="432" x2="432" y1="220" y2="377" />
                {[259, 298, 337, 376].map((y) => (
                  <line key={y} x1="432" x2="100%" y1={y} y2={y} />
                ))}
              </g>
            </svg>
            <div className="relative h-[117px] bg-[#c0dcc0]">
              <div className="w-[360px] h-[78px] bg-[#a485ff] border-2 border-l-0 border-[#5f76bd] text-[#4fdc2a]">
                <div className="h-[37px] flex">
                  <div className="w-[72px] shrink-0 bg-[#c0dcc0] text-[#008000]">
                    <p>读取寄存器地</p>
                    <p><Mixed text="地址400006~4" /></p>
                    <p><Mixed text="地址40000A~4" /></p>
                  </div>
                  <div>
                    <p><Mixed text="址、读取寄存器数量在P2P块中设置" /></p>
                    <p><Mixed text="00009为标签UID可读不可写" /></p>
                    <p>
                      <Mixed text="04106为用户数据区可读可写（最大内存以标签内部内" />
                      <span className="text-[#008000]">存为准）</span>
                    </p>
                  </div>
                </div>
                <p className="pt-3.5">
                  <Mixed text="触发M00010，置位m00000触发读取，读取到的数据存储到D00000~D00" />
                  <span className="text-[#008000]"><Mixed text="003中。" /></span>
                </p>
              </div>
              <p className="pt-3.5"><Mixed text="触发M00011,置位M00001,把D00010~D00013中指令写入标签中" /></p>
            </div>
          </div>
        </div>
      </div>
    </div>
  );
}

function Watermark() {
  return (
    <svg className="absolute left-0 top-0 w-[728px] h-[639px] pointer-events-none" aria-hidden="true">
      <defs>
        <linearGradient id="leaf" x1="0" x2="1" y1="0.6" y2="0.3">
          <stop offset="0" stopColor="#9ccf6a" />
          <stop offset="1" stopColor="#3cab9a" />
        </linearGradient>
      </defs>
      <path d="M467 217L566 236Q571 240 565 245L518 277Q516 279 511 277L484 271Q477 270 474 262z" fill="url(#leaf)" opacity="0.3" />
      <path d="M580 242L592 294Q592 300 587 304L502 363Q495 366 493 359L486 318Q485 313 491 308L571 257Q578 251 580 242z" fill="#3fa9dc" opacity="0.22" />
      <g fill="#000" opacity="0.12">
        <text x="72" y="381" fontSize="70" fontWeight="500" fontFamily="Inter" transform="rotate(-14 72 381)">CHENKONG</text>
        <text x="82" y="450" fontSize="64" fontWeight="500" fontFamily="Noto Sans CJK SC" transform="rotate(-12 82 450)">晨控智能</text>
        <circle cx="595" cy="205" r="17" fill="none" stroke="#000" strokeWidth="4" />
        <text x="587" y="214" fontSize="25" fontWeight="600" fontFamily="Inter" transform="rotate(-14 595 205)">R</text>
      </g>
    </svg>
  );
}

export default function App() {
  const menus = ['工程(P)', '编辑(E)', '查找/替换(F)', '查看(V)', '在线(O)', '监控(M)', '调试(D)', '工具(T)', '窗口(W)', '帮助(H)'];
  return (
    <div className="relative min-h-screen flex flex-col overflow-hidden bg-[#293955] border-r border-b border-[#c0c0c0] font-['Noto_Sans','Noto_Sans_CJK_SC',sans-serif]">
      <header className="bg-[#d9deea]">
        <div className="h-3 pb-1 overflow-hidden flex items-end gap-2.5 pl-1 bg-[#d6dbe9] border-b border-[#b9becb]">
          <svg viewBox="0 0 12 12" className="w-3 h-3 shrink-0" aria-hidden="true">
            <path d="M0 4h7v5H3z" fill="#35a8dc" />
            <path d="M5 7l6-1v6H9L5 9z" fill="#53b748" />
          </svg>
          <h1 className="text-[13px] leading-4 h-4 text-[#3c4458] whitespace-pre">MODBUSRTU - XG5000</h1>
        </div>
        <nav className="h-[25px] flex items-center gap-4 pl-0.5 bg-[#d6dbe9] text-xs text-black whitespace-nowrap">
          <span className="w-[5px] h-5 ml-px -mr-2 bg-[radial-gradient(circle,#59627a_0.8px,transparent_1px)] bg-[size:3px_3px]" />
          {menus.map((menu) => (
            <button key={menu} type="button">{menu}</button>
          ))}
        </nav>
        <div className="h-[26px] flex items-center gap-1 pl-0.5 overflow-hidden">
          <ToolGroup tools={fileTools} />
          <ToolGroup tools={editTools} />
          <ToolGroup tools={findTools} grow />
        </div>
        <div className="h-[26px] flex items-center gap-1 pl-0.5 overflow-hidden">
          <ToolGroup tools={runTools} />
          <ToolGroup tools={monitorTools} />
          <ToolGroup tools={debugTools} grow />
        </div>
        <div className="h-[26px] flex items-center gap-1 pl-0.5 overflow-hidden">
          <ToolGroup tools={ladderTools} />
          <ToolGroup tools={viewTools} grow />
        </div>
      </header>

      <main className="flex-1 flex gap-1.5">
        <aside className="w-[181px] shrink-0 flex flex-col">
          <ProjectPane />
          <FunctionPane />
        </aside>
        <Editor />
      </main>

      <ContextMenu entries={mainMenu} className="left-[127px] top-[221px] w-[160px]" />
      <ContextMenu entries={subMenu} className="left-[286px] top-[251px] w-[180px]" />

      {/* callouts for the steps to click */}
      <div className="absolute left-[38px] top-[212px] w-[159px] h-[18px] border-[3px] border-[#16dfdc] pointer-events-none" />
      <div className="absolute left-[127px] top-[251px] w-[153px] h-[25px] border-[3px] border-[#16dfdc] pointer-events-none" />
      <div className="absolute left-[288px] top-[326px] w-[176px] h-[24px] border-[3px] border-[#16dfdc] pointer-events-none" />
      <Watermark />
    </div>
  );
}
